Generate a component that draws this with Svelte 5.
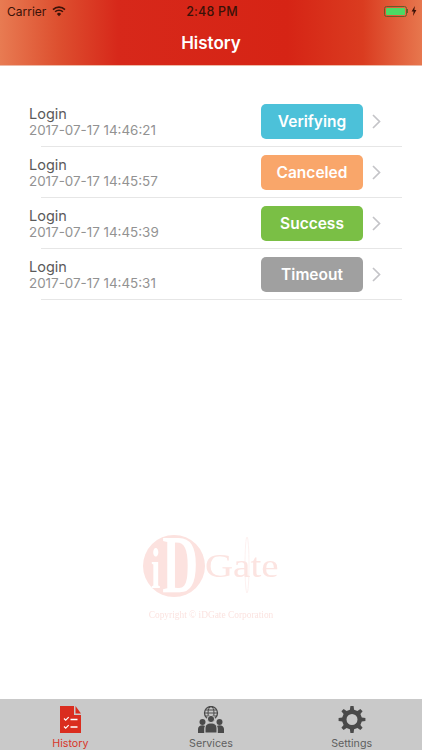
<script>
  const rows = [
    { title: 'Login', time: '2017-07-17 14:46:21', status: 'Verifying', kind: 'verifying' },
    { title: 'Login', time: '2017-07-17 14:45:57', status: 'Canceled', kind: 'canceled' },
    { title: 'Login', time: '2017-07-17 14:45:39', status: 'Success', kind: 'success' },
    { title: 'Login', time: '2017-07-17 14:45:31', status: 'Timeout', kind: 'timeout' }
  ];

  // 8 tooth gear outline around (14, 13.5)
  function gearPath(teeth = 8, outer = 13.5, root = 10) {
    const step = (Math.PI * 2) / teeth;
    const pt = (r, a) => `${(14 + r * Math.sin(a)).toFixed(2)} ${(13.5 - r * Math.cos(a)).toFixed(2)}`;
    let d = '';
    for (let i = 0; i < teeth; i++) {
      const a = i * step;
      d += `${i ? 'L' : 'M'}${pt(root, a - step * 0.27)}L${pt(outer, a - step * 0.15)}L${pt(outer, a + step * 0.15)}L${pt(root, a + step * 0.27)}`;
    }
    return d + 'Z';
  }
  const gear = gearPath();
</script>

<div class="screen">
  <header class="header">
    <div class="status-bar">
      <div class="carrier">
        <span>Carrier</span>
        <svg class="wifi" width="14" height="11" viewBox="0 0 14 11">
          <path d="M1 3.6a8.6 8.6 0 0 1 12 0" fill="none" stroke="#3a1208" stroke-width="1.6" />
          <path d="M3.1 5.8a5.6 5.6 0 0 1 7.8 0" fill="none" stroke="#3a1208" stroke-width="1.6" />
          <path d="M7 10.2 4.9 7.9a3 3 0 0 1 4.2 0z" fill="#3a1208" />
        </svg>
      </div>
      <span class="clock">2:48 PM</span>
      <div class="battery">
        <div class="battery-body"><div class="battery-fill"></div></div>
        <div class="battery-cap"></div>
        <svg width="6" height="10" viewBox="0 0 6 10"><path d="M3.8 0 0.6 5.6h2L2 10l3.4-6H3.4z" fill="#3a1208" /></svg>
      </div>
    </div>
    <h1 class="title">History</h1>
  </header>

  <main class="content">
    <ul class="list">
      {#each rows as row}
        <li class="row">
          <div class="row-text">
            <span class="row-title">{row.title}</span>
            <span class="row-time">{row.time}</span>
          </div>
          <span class="badge {row.kind}">{row.status}</span>
          <svg class="chevron" width="9" height="15" viewBox="0 0 9 15">
            <path d="M1 1l6.5 6.5L1 14" fill="none" stroke="#c4c4c8" stroke-width="1.7" />
          </svg>
        </li>
      {/each}
    </ul>

    <div class="watermark">
      <svg class="logo" width="140" height="64" viewBox="0 0 140 64">
        <circle cx="33" cy="33" r="31" fill="#fce2df" />
        <text transform="translate(10 59) scale(0.6 1)" font-weight="700" fill="#fff"><tspan font-size="56" dy="-4">i</tspan><tspan font-size="83" dy="4" dx="3">D</tspan></text>
        <text transform="translate(64 44) scale(1.18 1)" font-size="33" fill="#fce4e1">Gate</text>
        <ellipse cx="106" cy="32" rx="2" ry="28" fill="none" stroke="#fbe8e6" stroke-width="0.6" />
      </svg>
      <div class="copyright">Copyright © iDGate Corporation</div>
    </div>
  </main>

  <nav class="tabbar">
    <div class="tab active">
      <svg width="21" height="27" viewBox="0 0 21 27">
        <path d="M0 0h14v9h7v18H0z" fill="#da2d1f" />
        <path d="M15.5 0 21 7.5h-5.5z" fill="#da2d1f" />
        <path d="M4 12.5l1.7 1.7 3-3M4 20.5l1.7 1.7 3-3" fill="none" stroke="#fff" stroke-width="1.2" />
        <path d="M10.5 13.5h7M10.5 21h7" stroke="#fff" stroke-width="1.5" />
      </svg>
      <span>History</span>
    </div>
    <div class="tab">
      <svg width="28" height="27" viewBox="0 0 28 27">
        <circle cx="14" cy="7" r="6.5" fill="none" stroke="#4a4a4a" stroke-width="1.3" />
        <ellipse cx="14" cy="7" rx="3" ry="6.5" fill="none" stroke="#4a4a4a" stroke-width="1" />
        <path d="M7.5 7h13M8.5 4h11M8.5 10h11" stroke="#4a4a4a" stroke-width="1" />
        <circle cx="14" cy="13" r="3.6" fill="#4a4a4a" stroke="#c9c9c9" stroke-width="1" />
        <path d="M8 27v-5c0-3 2.5-5 6-5s6 2 6 5v5z" fill="#4a4a4a" stroke="#c9c9c9" stroke-width="1" />
        <circle cx="5.5" cy="16" r="3" fill="#4a4a4a" />
        <path d="M1 27v-4c0-2.5 2-3.8 4.5-3.8 1.2 0 2 .3 2.5.8-.5.8-.8 1.7-.8 3v4z" fill="#4a4a4a" />
        <circle cx="22.5" cy="16" r="3" fill="#4a4a4a" />
        <path d="M27 27v-4c0-2.5-2-3.8-4.5-3.8-1.2 0-2 .3-2.5.8.5.8.8 1.7.8 3v4z" fill="#4a4a4a" />
      </svg>
      <span>Services</span>
    </div>
    <div class="tab">
      <svg width="28" height="27" viewBox="0 0 28 27">
        <path fill="#4a4a4a" fill-rule="evenodd" d="{gear}M14 8a5.5 5.5 0 1 0 0 11 5.5 5.5 0 0 0 0-11z" />
      </svg>
      <span>Settings</span>
    </div>
  </nav>
</div>

<style>
  :global(body) {
    margin: 0;
    background: #fff;
  }

  .screen {
    width: 422px;
    height: 750px;
    display: flex;
    flex-direction: column;
    overflow: hidden;
    font-family: Inter, "Liberation Sans", sans-serif;
  }

  .header {
    height: 65px;
    flex-shrink: 0;
    background: linear-gradient(90deg, #e87b52 0%, #dd4f2f 14%, #d7281a 28%, #d62415 68%, #da3c20 86%, #e7774e 100%);
    border-bottom: 1px solid #eeb9a6;
    display: flex;
    flex-direction: column;
  }

  .status-bar {
    height: 22px;
    display: grid;
    grid-template-columns: 1fr auto 1fr;
    align-items: center;
    padding: 0 5px 0 7px;
    color: #3a1208;
    font-size: 12px;
  }

  .carrier {
    display: flex;
    align-items: center;
    gap: 6px;
  }

  .clock {
    font-weight: 500;
    font-size: 12.5px;
    letter-spacing: 0.2px;
  }

  .battery {
    display: flex;
    align-items: center;
    justify-content: flex-end;
  }

  .battery-body {
    width: 23px;
    height: 11px;
    box-sizing: border-box;
    border: 1px solid #6b5a28;
    border-radius: 2.5px;
    padding: 1px;
  }

  .battery-fill {
    height: 100%;
    background: #4cd964;
    border-radius: 1px;
  }

  .battery-cap {
    width: 1.5px;
    height: 4px;
    background: #6b5a28;
    margin-right: 3px;
  }

  .title {
    margin: 0;
    text-align: center;
    color: #fff;
    font-size: 17px;
    font-weight: 600;
    line-height: 42px;
  }

  .content {
    flex: 1;
    display: flex;
    flex-direction: column;
    background: #fff;
  }

  .list {
    list-style: none;
    margin: 30px 0 0;
    padding: 0;
  }

  .row {
    height: 51px;
    box-sizing: border-box;
    margin: 0 20px 0 41px;
    border-bottom: 1px solid #e6e6e6;
    display: flex;
    align-items: center;
  }

  .row-text {
    flex: 1;
    display: flex;
    flex-direction: column;
    margin-left: -12px;
  }

  .row-title {
    font-size: 14.5px;
    line-height: 19px;
    color: #5a5a5a;
  }

  .row-time {
    font-size: 13.4px;
    line-height: 15px;
    color: #929292;
  }

  .badge {
    width: 102px;
    height: 35px;
    border-radius: 5px;
    display: flex;
    align-items: center;
    justify-content: center;
    color: #fff;
    font-size: 15.5px;
    font-weight: 600;
  }

  .verifying { background: #4cc1d9; }
  .canceled { background: #f9a66a; }
  .success { background: #7abf45; }
  .timeout { background: #a0a0a0; }

  .chevron {
    margin: 0 21px 0 9px;
  }

  .watermark {
    flex: 1;
    display: flex;
    flex-direction: column;
    align-items: center;
    padding-top: 233px;
    filter: blur(0.4px);
  }

  .logo {
    font-family: "Liberation Serif", serif;
    overflow: visible;
  }

  .copyright {
    margin-top: 13px;
    font-family: "Liberation Serif", serif;
    font-size: 9.4px;
    color: #fbe3e0;
  }

  .tabbar {
    height: 51px;
    flex-shrink: 0;
    background: #c9c9c9;
    display: grid;
    grid-template-columns: repeat(3, 1fr);
  }

  .tab {
    display: flex;
    flex-direction: column;
    align-items: center;
    gap: 4px;
    padding-top: 7px;
    color: #5f5f5f;
    font-size: 10.7px;
    line-height: 13px;
    overflow: hidden;
  }

  .tab.active {
    color: #d8362a;
  }
</style>
